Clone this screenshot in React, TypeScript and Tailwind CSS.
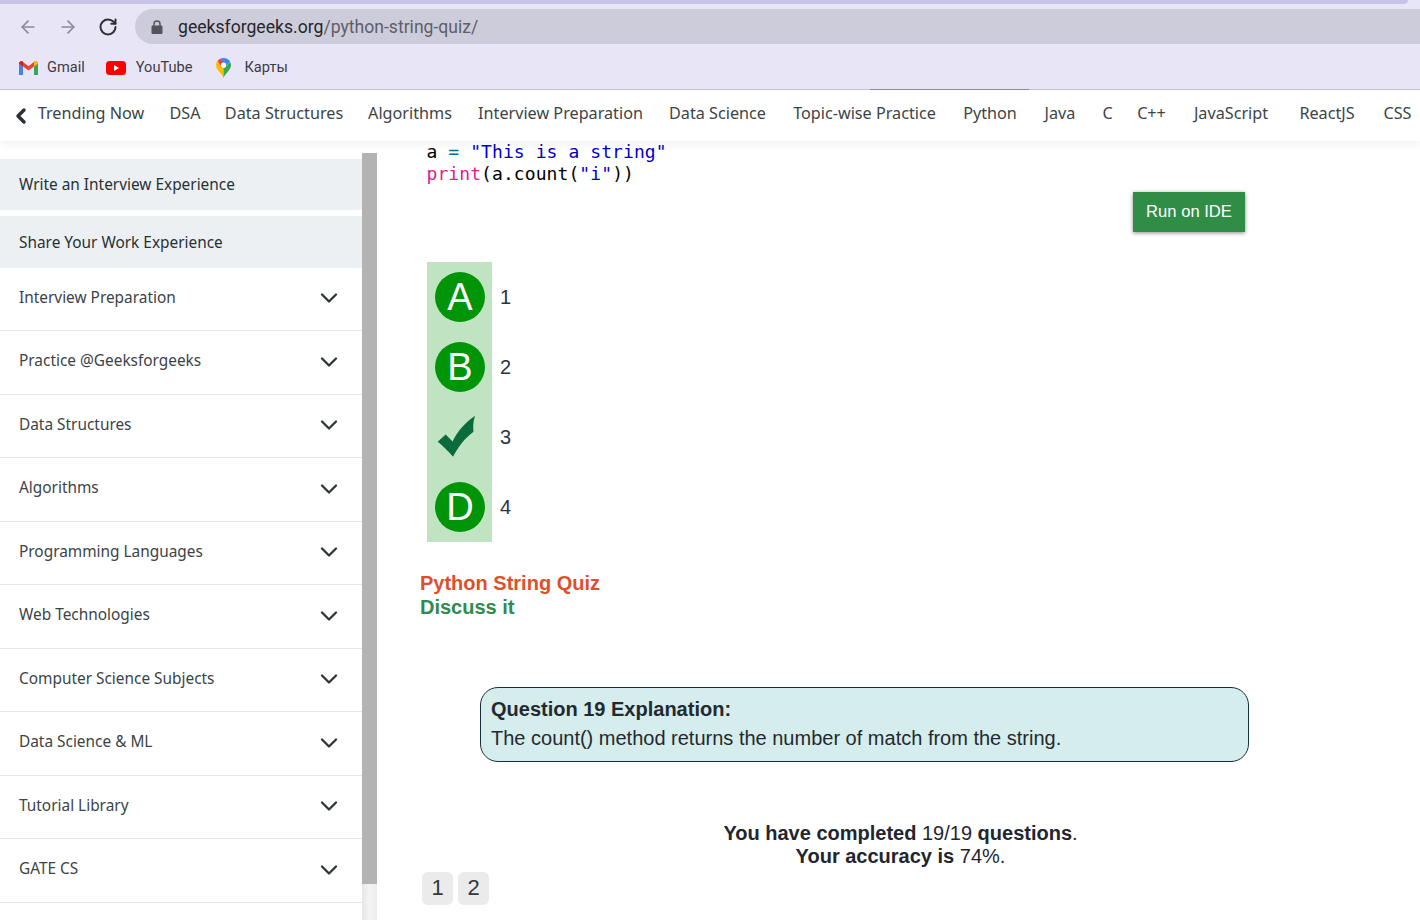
import { ArrowLeft, ArrowRight, ChevronDown, ChevronLeft, RotateCw } from 'lucide-react'

const navItems = [
    { label: 'DSA', width: 'w-[30px]' },
    { label: 'Data Structures', width: 'w-[117px]' },
    { label: 'Algorithms', width: 'w-[84px]' },
    { label: 'Interview Preparation', width: 'w-[166px]' },
    { label: 'Data Science', width: 'w-[97px]' },
    { label: 'Topic-wise Practice', width: 'w-[146px]' },
    { label: 'Python', width: 'w-[54px]' },
    { label: 'Java', width: 'w-[35px]' },
    { label: 'C', width: 'w-[9px]' },
    { label: 'C++', width: 'w-[28px]' },
    { label: 'JavaScript', width: 'w-[80px]' },
    { label: 'ReactJS', width: 'w-[61px]' },
    { label: 'CSS', width: 'w-[29px]' },
]

const sideItems = ['Interview Preparation', 'Practice @Geeksforgeeks', 'Data Structures', 'Algorithms', 'Programming Languages', 'Web Technologies', 'Computer Science Subjects', 'Data Science & ML', 'Tutorial Library', 'GATE CS']

const GmailIcon = () => (
    <svg width="19" height="14" viewBox="0 0 19 14">
        <path d="M0 2.5V14h4V5.5z" fill="#4285f4" />
        <path d="M15 5.5V14h4V2.5z" fill="#34a853" />
        <path d="M0 2.5 C0 .5 2 -.5 3.5 .6 L9.5 5.2 L15.5 .6 C17 -.5 19 .5 19 2.5 L15 5.5 L9.5 9.6 L4 5.5z" fill="#ea4335" />
        <path d="M0 2.5 L4 5.5 V1 L3.5 .6 C2 -.5 0 .5 0 2.5z" fill="#c5221f" />
        <path d="M15 1 V5.5 L19 2.5 C19 .5 17 -.5 15.5 .6z" fill="#fbbc04" />
    </svg>
)

const YoutubeIcon = () => (
    <svg width="20" height="14" viewBox="0 0 20 14">
        <rect width="20" height="14" rx="3.5" fill="#f00" />
        <path d="M8 4l5 3-5 3z" fill="#fff" />
    </svg>
)

const MapsIcon = () => (
    <svg width="15" height="20" viewBox="0 0 15 20">
        <path d="M7.5 20C6.5 16 0 12 0 7.2 0 5.5.6 3.8 1.8 2.6L7.5 7.5z" fill="#fbbc04" />
        <path d="M7.5 20C8.5 16 15 12 15 7.2 15 6 14.7 5 14.2 4L7.5 10z" fill="#34a853" />
        <path d="M1.8 2.6 4 .8 10 6 5.5 10z" fill="#ea4335" />
        <path d="M4 .8C5 .3 6.3 0 7.5 0 10.5 0 13 1.6 14.2 4L10 7.5z" fill="#4285f4" />
        <circle cx="7.5" cy="7.2" r="2.7" fill="#fff" />
    </svg>
)

const LockIcon = () => (
    <svg width="12" height="14" viewBox="0 0 12 14">
        <path d="M3 6V4a3 3 0 0 1 6 0v2" fill="none" stroke="#55545e" strokeWidth="1.5" />
        <rect x="0.5" y="5.5" width="11" height="8.5" rx="1.2" fill="#55545e" />
    </svg>
)

const OptionCircle = ({ letter }: { letter: string }) => (
    <div className="w-[50px] h-[50px] rounded-full bg-[#009408] flex items-center justify-center text-white text-[38px] leading-none">
        {letter}
    </div>
)

const App = () => {
    return (
        <div className="w-[1420px] h-[920px] overflow-hidden bg-white flex flex-col font-['Liberation_Sans',sans-serif]">
            {/* browser chrome */}
            <div className="h-[90px] shrink-0 bg-[#e8e6f6] border-b border-[#c6c4d2] flex flex-col relative">
                <div className="h-[4px] w-[1408px] bg-[#c8c3e6] rounded-br-md shrink-0"></div>
                <div className="h-[35px] mt-[5px] flex items-center shrink-0">
                    <div className="w-[135px] pl-[18px] flex items-center gap-[20px] shrink-0">
                        <ArrowLeft className="w-[20px] h-[20px] text-[#8c8b97]" strokeWidth={2} />
                        <ArrowRight className="w-[20px] h-[20px] text-[#8c8b97]" strokeWidth={2} />
                        <RotateCw className="w-[20px] h-[20px] text-[#2f3033]" strokeWidth={2.4} />
                    </div>
                    <div className="flex-1 h-[35px] bg-[#cdccda] rounded-l-full flex items-center pl-[16px] gap-[15px] font-['Roboto',sans-serif] text-[17.6px]">
                        <LockIcon />
                        <span className="mt-[1px] text-[#26262b]">geeksforgeeks.org<span className="text-[#5f5e69]">/python-string-quiz/</span></span>
                    </div>
                </div>
                <div className="flex-1 flex items-center pl-[19px] pt-[2px] font-['Roboto',sans-serif] text-[14.6px] text-[#3c3c44]">
                    <GmailIcon />
                    <span className="ml-[9px]">Gmail</span>
                    <span className="ml-[21px]"><YoutubeIcon /></span>
                    <span className="ml-[10px]">YouTube</span>
                    <span className="ml-[24px]"><MapsIcon /></span>
                    <span className="ml-[13px]">Карты</span>
                </div>
                <div className="absolute left-[870px] bottom-[-1px] w-[159px] h-[1px] bg-[#8d8c96]"></div>
            </div>

            {/* site nav */}
            <div className="h-[51px] shrink-0 bg-white flex items-center shadow-[0_4px_8px_rgba(0,0,0,0.05)] relative z-10 font-['Noto_Sans',sans-serif] text-[16.2px] text-[#3d4448] whitespace-nowrap">
                <ChevronLeft className="w-[24px] h-[24px] ml-[9px] text-[#2b3236]" strokeWidth={3.5} />
                <span className="ml-[5px] w-[106px] mb-[4px] flex justify-center">Trending Now</span>
                <div className="flex items-center gap-[25.5px] ml-[26px] mb-[4px]">
                    {navItems.map((item) => (
                        <span key={item.label} className={`${item.width} flex justify-center`}>{item.label}</span>
                    ))}
                </div>
            </div>

            <div className="flex-1 flex min-h-0">
                {/* sidebar */}
                <div className="w-[362px] shrink-0 pt-[18px] font-['Noto_Sans',sans-serif] text-[15.4px] text-[#3b4347]">
                    <div className="h-[51px] bg-[#edf0f3] flex items-center pl-[19px] text-[#273035]">Write an Interview Experience</div>
                    <div className="h-[51.5px] mt-[6px] bg-[#edf0f3] flex items-center pl-[19px] pt-[1px] text-[#273035]">Share Your Work Experience</div>
                    {sideItems.map((item) => (
                        <div key={item} className="h-[63.5px] border-b border-[#e3e5e7] flex items-center justify-between pl-[19px] pr-[19px]">
                            <span className="mb-[3px]">{item}</span>
                            <ChevronDown className="w-[28px] h-[28px] mb-[1px] text-[#2f363a]" strokeWidth={2} />
                        </div>
                    ))}
                </div>

                {/* sidebar scrollbar */}
                <div className="w-[15px] shrink-0 mt-[12px] flex flex-col">
                    <div className="h-[731px] bg-[#b3b3b3]"></div>
                    <div className="flex-1 bg-gradient-to-r from-[#e6e6e6] via-[#f4f4f4] to-[#ececec]"></div>
                </div>

                {/* quiz */}
                <div className="flex-1 min-w-0 flex flex-col text-[#2a2f38]">
                    <div className="pl-[49.5px] font-['DejaVu_Sans_Mono',monospace] text-[18px] tracking-[0.08px] leading-[22px] text-black whitespace-pre">
                        <div>a <span className="text-[#006d9e]">=</span> <span className="text-[#0000cd]">"This is a string"</span></div>
                        <div><span className="text-[#e0218a]">print</span>(a.count(<span className="text-[#0000cd]">"i"</span>))</div>
                    </div>
                    <div className="flex justify-end pr-[175px] mt-[7px]">
                        <div className="w-[112px] h-[40px] bg-[#308d46] text-white text-[16.6px] flex items-center justify-center shadow-[0_1px_4px_rgba(0,0,0,0.45)]">Run on IDE</div>
                    </div>

                    <div className="flex ml-[50px] mt-[30px]">
                        <div className="w-[65px] h-[280px] bg-[#c0e4c2] flex flex-col">
                            <div className="h-[70px] flex items-center pl-[8px]"><OptionCircle letter="A" /></div>
                            <div className="h-[70px] flex items-center pl-[8px]"><OptionCircle letter="B" /></div>
                            <div className="h-[70px] flex items-center pl-[2px]">
                                <svg width="50" height="44" viewBox="0 0 50 44">
                                    <path d="M8.7 26.7 L16.7 19.5 L23.5 26.5 C29 15 37 7 46 .7 C44 7 44 12 44.5 16.7 C36 23 29 32 24 41.7 C19 36 14 31 8.7 26.7z" fill="#0b6b3c" />
                                </svg>
                            </div>
                            <div className="h-[70px] flex items-center pl-[8px]"><OptionCircle letter="D" /></div>
                        </div>
                        <div className="flex flex-col text-[20px] pl-[8px] text-[#2d3340]">
                            <div className="h-[70px] flex items-center">1</div>
                            <div className="h-[70px] flex items-center">2</div>
                            <div className="h-[70px] flex items-center">3</div>
                            <div className="h-[70px] flex items-center">4</div>
                        </div>
                    </div>

                    <div className="ml-[43px] mt-[29px] text-[20px] leading-[24px] font-bold">
                        <div className="text-[#df4f2c]">Python String Quiz</div>
                        <div className="text-[#2f8a4e]">Discuss it</div>
                    </div>

                    <div className="ml-[103px] w-[769px] h-[75px] mt-[68px] border border-[#16303a] rounded-[18px] bg-[#d6eded] px-[10px] pt-[7px] text-[20px] text-[#24292f]">
                        <div className="font-bold leading-[29px]">Question 19 Explanation:</div>
                        <div className="leading-[28px]">The count() method returns the number of match from the string.</div>
                    </div>

                    <div className="w-[1047px] mt-[60px] text-[20px] leading-[23px] text-center text-[#1f2630]">
                        <div><b>You have completed</b> 19/19 <b>questions</b>.</div>
                        <div><b>Your accuracy is</b> 74%.</div>
                    </div>

                    <div className="flex gap-[5px] ml-[45px] mt-[4px] text-[22px] text-[#33383f]">
                        <div className="w-[31px] h-[33px] rounded-md bg-[#ebebeb] flex items-center justify-center pb-[2px]">1</div>
                        <div className="w-[31px] h-[33px] rounded-md bg-[#ebebeb] flex items-center justify-center pb-[2px]">2</div>
                    </div>
                </div>
            </div>
        </div>
    )
}

export default App
